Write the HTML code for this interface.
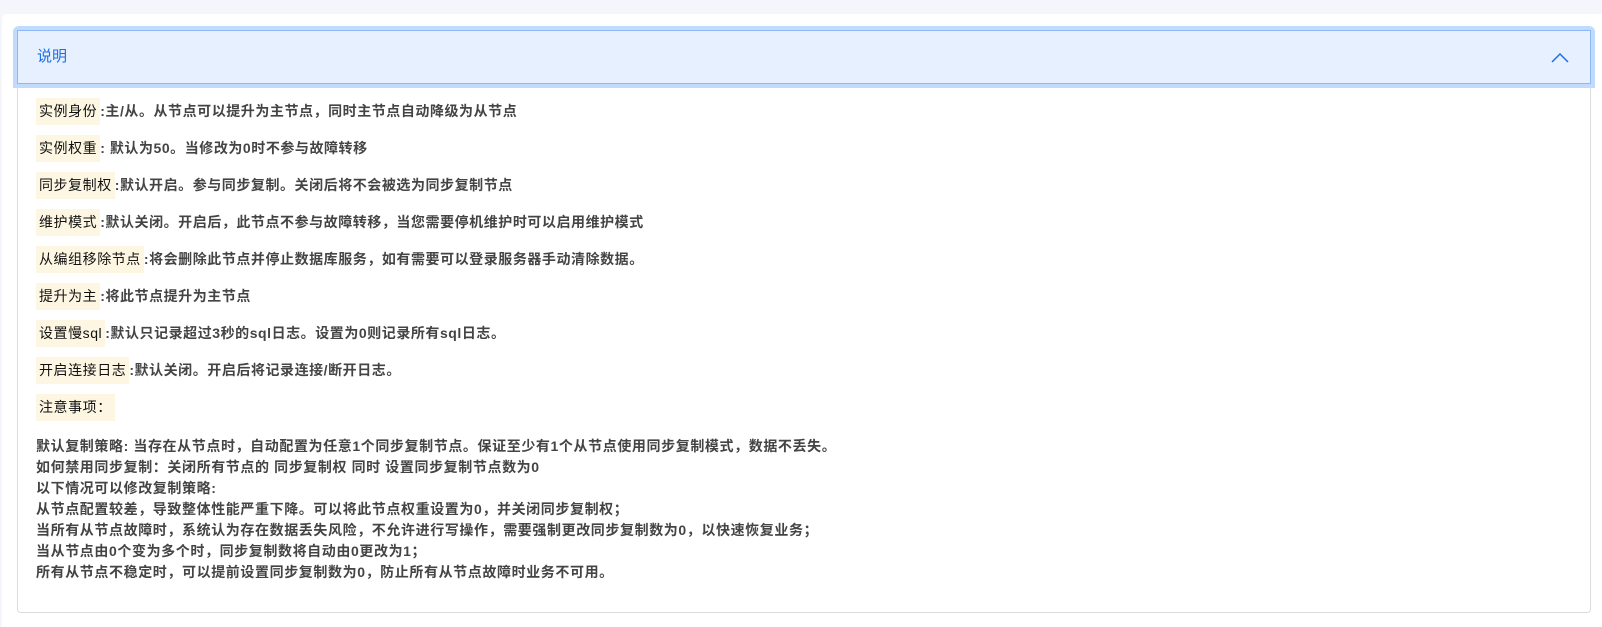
<!DOCTYPE html>
<html><head><meta charset="utf-8"><style>
*{margin:0;padding:0;box-sizing:border-box}
body{width:1602px;height:627px;background:#f5f6fc;font-family:"Liberation Sans","Noto Sans CJK SC",sans-serif;overflow:hidden;position:relative}
.card{position:absolute;left:2px;top:14px;width:1600px;height:613px;background:#fff;border-radius:4px 0 0 0}
.glow{position:absolute;left:13px;top:26px;width:1582px;height:62px;background:#c2dafb;border-radius:6px 6px 0 0}
.hd{position:absolute;left:17px;top:30px;width:1574px;height:54px;background:#e7f0fe;border:1px solid #8cb8f8;color:#1a6ee8;font-size:15px;line-height:52px;padding-left:19px}
.body{position:absolute;left:17px;top:88px;width:1574px;height:525px;border:1px solid #dcdcdc;border-top:none;border-radius:0 0 4px 4px}
.row{position:absolute;left:36px;height:27px;line-height:27px;font-size:14px;letter-spacing:0.55px;color:#444;font-weight:bold;white-space:nowrap}
.tag{display:inline-block;background:#fdf6e3;color:#111;font-weight:normal;padding:0 3px}
.notes{position:absolute;left:36px;top:436px;font-size:14px;letter-spacing:0.6px;line-height:21px;color:#444;font-weight:bold;white-space:nowrap}
</style></head><body>
<div class="card"></div>
<div class="glow"></div>
<div class="hd">说明</div>
<svg style="position:absolute;left:1551px;top:52px" width="18" height="12"><path d="M1 10 L9 2 L17 10" fill="none" stroke="#1a6ee8" stroke-width="1.5"/></svg>
<div class="body"></div>
<div class="row" style="top:98px"><span class="tag">实例身份</span>:主/从。从节点可以提升为主节点，同时主节点自动降级为从节点</div>
<div class="row" style="top:135px"><span class="tag">实例权重</span>: 默认为50。当修改为0时不参与故障转移</div>
<div class="row" style="top:172px"><span class="tag">同步复制权</span>:默认开启。参与同步复制。关闭后将不会被选为同步复制节点</div>
<div class="row" style="top:209px"><span class="tag">维护模式</span>:默认关闭。开启后，此节点不参与故障转移，当您需要停机维护时可以启用维护模式</div>
<div class="row" style="top:246px"><span class="tag">从编组移除节点</span>:将会删除此节点并停止数据库服务，如有需要可以登录服务器手动清除数据。</div>
<div class="row" style="top:283px"><span class="tag">提升为主</span>:将此节点提升为主节点</div>
<div class="row" style="top:320px"><span class="tag">设置慢sql</span>:默认只记录超过3秒的sql日志。设置为0则记录所有sql日志。</div>
<div class="row" style="top:357px"><span class="tag">开启连接日志</span>:默认关闭。开启后将记录连接/断开日志。</div>
<div class="row" style="top:394px"><span class="tag">注意事项：</span></div>
<div class="notes">默认复制策略: 当存在从节点时，自动配置为任意1个同步复制节点。保证至少有1个从节点使用同步复制模式，数据不丢失。<br>如何禁用同步复制：关闭所有节点的 同步复制权 同时 设置同步复制节点数为0<br>以下情况可以修改复制策略:<br>从节点配置较差，导致整体性能严重下降。可以将此节点权重设置为0，并关闭同步复制权；<br>当所有从节点故障时，系统认为存在数据丢失风险，不允许进行写操作，需要强制更改同步复制数为0，以快速恢复业务；<br>当从节点由0个变为多个时，同步复制数将自动由0更改为1；<br>所有从节点不稳定时，可以提前设置同步复制数为0，防止所有从节点故障时业务不可用。</div>
</body></html>
